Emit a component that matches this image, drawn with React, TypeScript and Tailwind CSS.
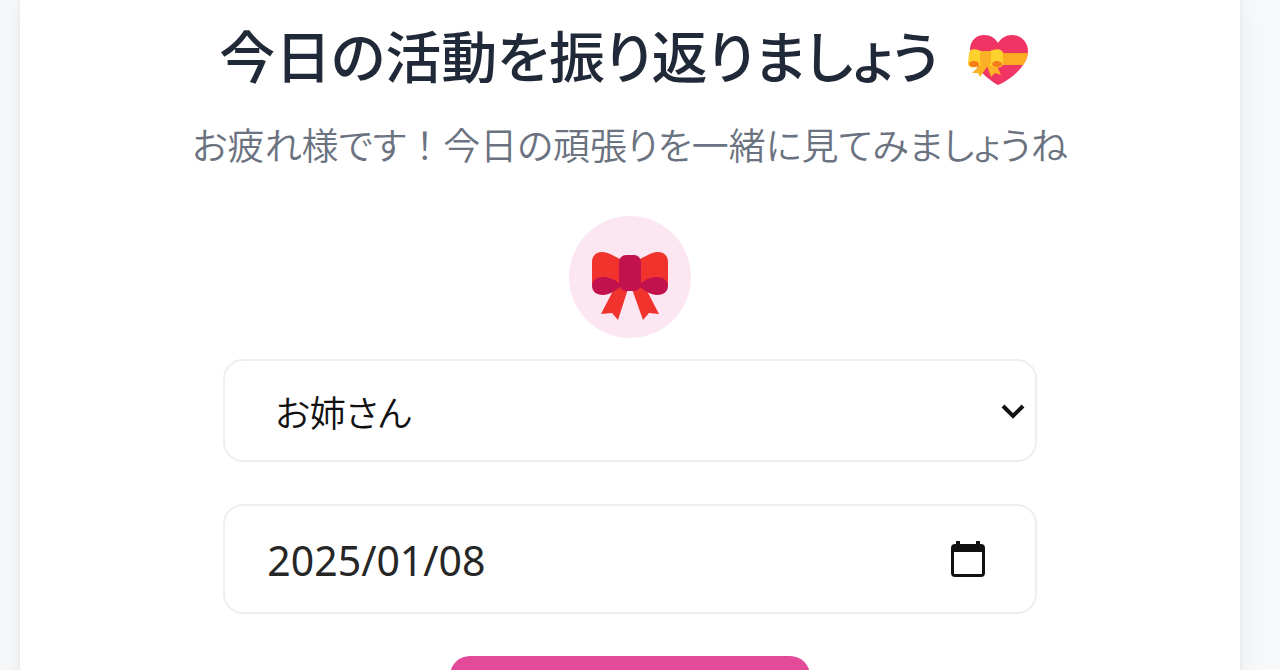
import { useState } from 'react';

function HeartIcon() {
  return (
    <svg viewBox="0 0 62 52" className="mt-3 h-[52px] w-[62px] shrink-0" role="img" aria-label="リボン付きハート">
      <defs>
        <clipPath id="heart">
          <path d="M31 51 C22 46 3 31 3 16 C3 7 9 1 17 1 C24 1 28 4 31 9 C34 4 39 1 45 1 C54 1 61 8 61 17 C61 32 43 46 31 51Z" />
        </clipPath>
      </defs>
      <g clipPath="url(#heart)">
        <rect width="62" height="52" fill="#f03464" />
        <rect x="30" y="19" width="32" height="12" fill="#fbad22" />
      </g>
      <path d="M17 27 L5 39 L11 39 L13 43 L22 30Z" fill="#fbb224" />
      <path d="M19 29 L24 43 L28 39 L34 41 L28 28Z" fill="#fbb224" />
      <path d="M17 19 C10 14 2 14 2 20 L1 29 C1 35 8 35 17 29Z" fill="#fdd22f" />
      <path d="M20 19 C27 14 36 14 36 20 L36 29 C36 35 28 35 20 29Z" fill="#fdd22f" />
      <ellipse cx="7" cy="30" rx="5" ry="3" fill="#f57c1a" />
      <ellipse cx="30" cy="30" rx="5" ry="3" fill="#f57c1a" />
      <rect x="13" y="17" width="11" height="14" rx="3" fill="#fbb025" />
    </svg>
  );
}

function RibbonIcon() {
  return (
    <svg viewBox="0 0 76 70" className="h-[70px] w-[76px]" role="img" aria-label="リボン">
      <path d="M24 34 L36 38 L26 69 L20 62 L9 63Z" fill="#f0342d" />
      <path d="M52 34 L40 38 L51 69 L57 62 L67 63Z" fill="#f0342d" />
      <path d="M28 8 C20 4 15 1 10 1 C4 1 0 5 0 11 V34 L28 34Z" fill="#f0342d" />
      <path d="M48 8 C56 4 61 1 66 1 C72 1 76 5 76 11 V34 L48 34Z" fill="#f0342d" />
      <path d="M28 33 C22 28 17 26 11 26 C4 26 0 30 0 35 C0 40 4 44 11 44 C17 44 23 40 28 36Z" fill="#c2124e" />
      <path d="M48 33 C54 28 59 26 65 26 C72 26 76 30 76 35 C76 40 72 44 65 44 C59 44 53 40 48 36Z" fill="#c2124e" />
      <rect x="27" y="4" width="22" height="36" rx="7" fill="#c2124e" />
    </svg>
  );
}

export default function App() {
  const [person, setPerson] = useState('お姉さん');
  const [date, setDate] = useState('2025/01/08');

  return (
    <div className="h-screen overflow-hidden bg-[#f7f8fa] pr-10 pl-5 font-['Noto_Sans_CJK_JP','Noto_Sans',sans-serif]">
      <main className="flex min-h-screen flex-col items-center bg-white pt-3 shadow-[0_0_24px_rgba(0,0,0,0.06),0_0_4px_rgba(0,0,0,0.06)]">
        <h1 className="flex items-center gap-7 pr-3 text-[56px] leading-[84px] font-medium whitespace-nowrap text-[#1f2937] [font-feature-settings:'palt']">
          今日の活動を振り返りましょう
          <HeartIcon />
        </h1>
        <p className="mt-[18px] mb-[42px] text-[37px] leading-[60px] font-[350] whitespace-nowrap text-[#6b7280] [font-feature-settings:'palt']">
          お疲れ様です<span className="[font-feature-settings:normal]">！</span>今日の頑張りを一緒に見てみましょうね
        </p>
        <div className="flex size-[122px] shrink-0 items-center justify-center rounded-full bg-[#fbe6f2] pt-[18px]">
          <RibbonIcon />
        </div>
        <form className="mt-[21px] flex w-2/3 shrink-0 flex-col items-center gap-[42px]" onSubmit={(e) => e.preventDefault()}>
          <div className="relative w-full">
            <select
              aria-label="相手"
              value={person}
              onChange={(e) => setPerson(e.target.value)}
              className="block h-[103px] w-full appearance-none rounded-[20px] border-2 border-[#efefef] bg-white pl-[50px] text-[36px] font-[350] text-[#111111] [font-feature-settings:'palt']"
            >
              <option>お姉さん</option>
              <option>お母さん</option>
            </select>
            <svg viewBox="0 0 24 16" className="pointer-events-none absolute top-11 right-3 h-4 w-6" aria-hidden="true">
              <path d="M2 3 L12 13 L22 3" fill="none" stroke="#111111" strokeWidth="4" />
            </svg>
          </div>
          <div className="flex h-[110px] w-full items-center rounded-[20px] border-2 border-[#efefef] bg-white pr-[50px] pl-[42px]">
            <input
              type="text"
              aria-label="日付"
              value={date}
              onChange={(e) => setDate(e.target.value)}
              className="min-w-0 flex-1 bg-transparent pt-1 font-['Noto_Sans',sans-serif] text-[41px] text-[#262626] outline-none"
            />
            <button type="button" aria-label="カレンダーを開く">
              <svg viewBox="0 0 34 38" className="block h-[38px] w-[34px]" aria-hidden="true">
                <path d="M5 1h4v3h16V1h4v3h1q4 0 4 4v25q0 4-4 4H4q-4 0-4-4V8q0-4 4-4h1zM3 12v22h28V12z" fill="#111111" fillRule="evenodd" />
              </svg>
            </button>
          </div>
          <button
            type="submit"
            aria-label="振り返る"
            className="h-[100px] w-[360px] rounded-[20px] bg-[#e34b9a]"
          />
        </form>
      </main>
    </div>
  );
}
